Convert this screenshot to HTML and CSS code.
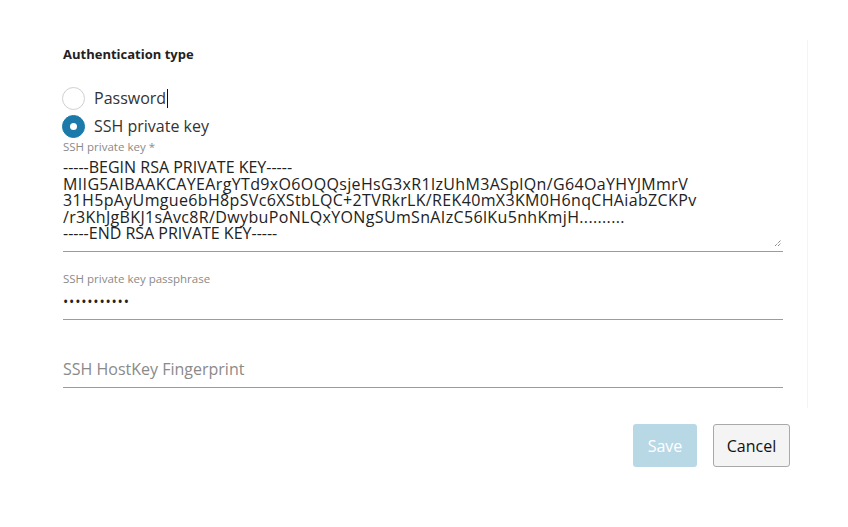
FILE: index.html
```html
<!DOCTYPE html>
<html lang="en">
<head>
  <meta charset="UTF-8" />
  <title>Authentication</title>
  <link rel="stylesheet" href="styles.css">
</head>
<body>
  <div class="page">
    <div class="panel">
      <form class="auth-form">
        <h3 class="section-title">Authentication type</h3>

        <!-- auth type choice -->
        <div class="radio-group">
          <label class="radio-row">
            <span class="radio"></span>
            <span class="radio-text">Password<span class="caret"></span></span>
          </label>
          <label class="radio-row">
            <span class="radio checked"></span>
            <span class="radio-text">SSH private key</span>
          </label>
        </div>

        <div class="field key-field">
          <div class="field-label">SSH private key *</div>
          <div class="key-box">
            <div class="key-text"><span class="key-edge">-----BEGIN RSA PRIVATE KEY-----</span>
MIIG5AIBAAKCAYEArgYTd9xO6OQQsjeHsG3xR1lzUhM3ASplQn/G64OaYHYJMmrV
31H5pAyUmgue6bH8pSVc6XStbLQC+2TVRkrLK/REK40mX3KM0H6nqCHAiabZCKPv
/r3KhJgBKJ1sAvc8R/DwybuPoNLQxYONgSUmSnAIzC56lKu5nhKmjH..........
<span class="key-edge">-----END RSA PRIVATE KEY-----</span></div>
            <svg class="grip" width="8" height="8" viewBox="0 0 8 8">
              <path d="M1 7 L7 1 M4 7 L7 4" stroke="#555" stroke-width="1" fill="none" stroke-dasharray="1 1"/>
            </svg>
          </div>
        </div>

        <div class="field pass-field">
          <div class="field-label">SSH private key passphrase</div>
          <div class="dots">&bull;&bull;&bull;&bull;&bull;&bull;&bull;&bull;&bull;&bull;&bull;</div>
        </div>

        <div class="field host-field">
          <div class="placeholder">SSH HostKey Fingerprint</div>
        </div>
      </form>
    </div>

    <div class="actions">
      <button type="button" class="btn btn-save" disabled>Save</button>
      <button type="button" class="btn btn-cancel">Cancel</button>
    </div>
  </div>
</body>
</html>
```

FILE: styles.css
```css
:root {
  --blue: #1b7aa9;
  --line: #9c9c9c;
  --label: #8a8a8a;
  --text: #333;
}

* {
  box-sizing: border-box;
}

body {
  margin: 0;
  background: #fff;
  font-family: 'Open Sans', sans-serif;
  color: var(--text);
}

.page {
  width: 848px;
  height: 527px;
  padding-top: 40px;
}

.panel {
  width: 808px;
  height: 368px;
  border-right: 1px solid #f4f4f4;
  padding-top: 6px;
}

.auth-form {
  width: 720px;
  margin-left: 63px;
}

.section-title {
  margin: 0;
  font-size: 13px;
  line-height: 16px;
  font-weight: bold;
  color: #222;
}

.radio-group {
  margin-top: 22px;
  margin-left: -1px;
}

.radio-row {
  display: flex;
  align-items: center;
  height: 28px;
}

.radio {
  width: 23px;
  height: 23px;
  border-radius: 50%;
  border: 1px solid #cfcfcf;
  background: #fff;
  margin-right: 9px;
  position: relative;
}

.radio.checked {
  background: var(--blue);
  border-color: var(--blue);
}

.radio.checked::after {
  content: '';
  position: absolute;
  left: 7px;
  top: 7px;
  width: 7px;
  height: 7px;
  border-radius: 50%;
  background: #fff;
}

.radio-text {
  font-size: 16px;
  color: #333;
}

.caret {
  display: inline-block;
  width: 1px;
  height: 19px;
  background: #111;
  vertical-align: -4px;
  margin-left: 1px;
}

.field {
  border-bottom: 1px solid var(--line);
}

.field-label {
  font-size: 11.5px;
  line-height: 14px;
  color: var(--label);
}

.key-box {
  position: relative;
  height: 97px;
  padding-top: 5px;
}

.key-text {
  white-space: pre;
  font-size: 16px;
  line-height: 16.5px;
  letter-spacing: 0.35px;
  color: #222;
}

.key-edge {
  letter-spacing: 0;
}

.grip {
  position: absolute;
  right: 1px;
  bottom: 4px;
}

.pass-field {
  margin-top: 20px;
  height: 48px;
}

.dots {
  margin-top: 6px;
  font-size: 14px;
  letter-spacing: 0.8px;
  color: #222;
}

.host-field {
  margin-top: 38px;
  height: 30px;
}

.placeholder {
  font-size: 16px;
  color: #8a8a8a;
}

.actions {
  display: flex;
  justify-content: flex-end;
  gap: 16px;
  width: 790px;
  margin-top: 16px;
}

.btn {
  height: 43px;
  font-family: 'Open Sans', sans-serif;
  font-size: 16px;
  border-radius: 3px;
}

.btn-save {
  width: 64px;
  background: #b9d8e5;
  color: #fff;
  border: none;
}

.btn-cancel {
  width: 77px;
  background: #f4f4f4;
  color: #111;
  border: 1px solid #a9a9a9;
}
```
